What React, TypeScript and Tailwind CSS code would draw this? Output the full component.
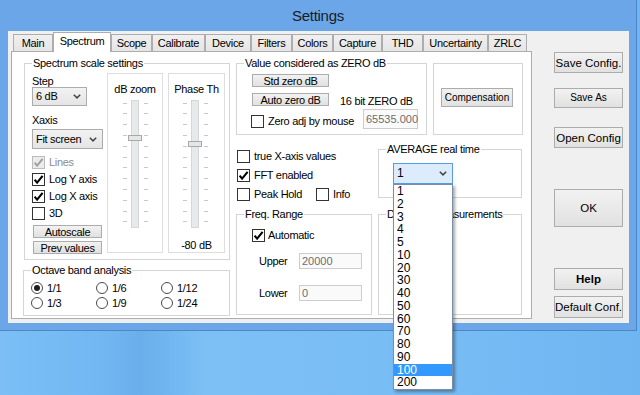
import React from 'react';

const tabs = [
  { label: 'Main', w: 'w-[40px]' },
  { label: 'Spectrum', w: 'w-[58px]', active: true },
  { label: 'Scope', w: 'w-[41px]' },
  { label: 'Calibrate', w: 'w-[53px]' },
  { label: 'Device', w: 'w-[46px]' },
  { label: 'Filters', w: 'w-[41px]' },
  { label: 'Colors', w: 'w-[41px]' },
  { label: 'Capture', w: 'w-[49px]' },
  { label: 'THD', w: 'w-[41px]' },
  { label: 'Uncertainty', w: 'w-[65px]' },
  { label: 'ZRLC', w: 'w-[39px]' },
];

const averages = ['1', '2', '3', '4', '5', '10', '20', '30', '40', '50', '60', '70', '80', '90', '100', '200'];

function Check({ checked, disabled }: { checked?: boolean; disabled?: boolean }) {
  return (
    <span
      className={`w-[13px] h-[13px] shrink-0 border flex items-center justify-center ${
        disabled ? 'border-[#bcbcbc] bg-[#ececec]' : 'border-[#333333] bg-white'
      }`}
    >
      {checked && (
        <svg width="11" height="11" viewBox="0 0 11 11">
          <path d="M1.6 5.6 L4.1 8.6 L9.6 1.8" fill="none" stroke={disabled ? '#a3a3a3' : '#000'} strokeWidth="2.1" />
        </svg>
      )}
    </span>
  );
}

function CheckRow({ label, checked, disabled }: { label: string; checked?: boolean; disabled?: boolean }) {
  return (
    <div className="flex items-start">
      <Check checked={checked} disabled={disabled} />
      <span className={`ml-[4px] leading-[12px] ${disabled ? 'text-[#8d8d8d]' : ''}`}>{label}</span>
    </div>
  );
}

function Radio({ label, checked }: { label: string; checked?: boolean }) {
  return (
    <div className="flex items-center h-[15px]">
      <span className="w-[12px] h-[12px] rounded-full border border-[#4a4a4a] bg-white flex items-center justify-center">
        {checked && <span className="w-[6px] h-[6px] rounded-full bg-[#1e1e1e]" />}
      </span>
      <span className="ml-[4px] leading-[12px]">{label}</span>
    </div>
  );
}

function Btn({ className = '', children }: { className?: string; children: React.ReactNode }) {
  return (
    <button
      type="button"
      className={`border border-[#acacac] bg-linear-to-b from-[#f2f2f2] to-[#e1e1e1] flex items-center justify-center overflow-hidden leading-[12px] whitespace-nowrap ${className}`}
    >
      {children}
    </button>
  );
}

function Group({ title, className = '', children }: { title?: string; className?: string; children?: React.ReactNode }) {
  return (
    <fieldset className={`border border-[#d5d5d5] min-w-0 shrink-0 ${className}`}>
      {title && <legend className="ml-[7px] px-[1px] leading-[13px] whitespace-nowrap">{title}</legend>}
      {children}
    </fieldset>
  );
}

function Combo({ value, focused, className = '' }: { value: string; focused?: boolean; className?: string }) {
  return (
    <div
      className={`border flex items-center justify-between pl-[3px] pr-[5px] ${
        focused ? 'border-[#569de5] bg-[#dcecfc] text-[12px]' : 'border-[#acacac] bg-linear-to-b from-[#f2f2f2] to-[#e5e5e5]'
      } ${className}`}
    >
      <span className="leading-[13px]">{value}</span>
      <svg width="8" height="5" viewBox="0 0 8 5">
        <path d="M0.8 0.8 L4 3.9 L7.2 0.8" fill="none" stroke="#444" strokeWidth="1.5" />
      </svg>
    </div>
  );
}

function TextBox({ value, className = '' }: { value: string; className?: string }) {
  return (
    <div className={`border border-[#cccccc] bg-[#fafafa] text-[#6d6d6d] flex items-center pl-[2px] tracking-normal ${className}`}>
      {value}
    </div>
  );
}

function Slider({ width, trackX, thumbY, ticksL, ticksR }: { width: number; trackX: number; thumbY: number; ticksL: number; ticksR: number }) {
  const ticks = Array.from({ length: 12 }, (_, i) => 2.5 + i * 10.8);
  return (
    <svg width={width} height="128" viewBox={`0 0 ${width} 128`} className="mt-[4px]">
      <rect x={trackX + 0.5} y="0.5" width="7" height="127" fill="#e7eaea" stroke="#d6d6d6" />
      {ticks.map((y) => (
        <g key={y}>
          <line x1={ticksL} x2={ticksL + 4} y1={Math.round(y) + 0.5} y2={Math.round(y) + 0.5} stroke="#c8c8c8" />
          <line x1={ticksR} x2={ticksR + 4} y1={Math.round(y) + 0.5} y2={Math.round(y) + 0.5} stroke="#c8c8c8" />
        </g>
      ))}
      <rect x={trackX - 2.5} y={thumbY + 0.5} width="13" height="5" fill="#e6e6e6" stroke="#a8a8a8" />
    </svg>
  );
}

export default function App() {
  return (
    <div className="w-[640px] h-[395px] overflow-hidden bg-[linear-gradient(90deg,#7bbff6_0%,#72b7f2_16%,#6aaeeb_22%,#7cc0f6_32%,#77bcf4_70%,#6fb5f1_100%)] font-['Liberation_Sans',Arial,sans-serif] text-[11px] tracking-[-0.3px] text-black">
      <div className="w-[637px] h-[331px] bg-[#6aa6e8] border-r border-b border-[#4f86c6] flex flex-col">
        <div className="h-[31px] flex items-center justify-center text-[15px] text-[#1c1c1c] leading-[31px]">Settings</div>

        <div className="flex-1 ml-[8px] mr-[7px] mb-[7px] bg-[#f0f0f0] flex">
          {/* tab control */}
          <div className="ml-[3px] mt-[1px] flex flex-col">
            <div className="flex items-end pl-[2px]">
              {tabs.map((t) =>
                t.active ? (
                  <div
                    key={t.label}
                    className={`${t.w} h-[20px] -mb-px relative z-10 bg-white border border-b-0 border-[#adadad] flex justify-center pt-[2px] leading-[13px]`}
                  >
                    {t.label}
                  </div>
                ) : (
                  <div
                    key={t.label}
                    className={`${t.w} h-[17px] bg-linear-to-b from-[#f0f0f0] to-[#e5e5e5] border border-b-0 border-[#adadad] flex justify-center pt-[2px] leading-[13px]`}
                  >
                    {t.label}
                  </div>
                )
              )}
            </div>

            <div className="w-[521px] h-[268px] bg-white border border-[#adadad] flex pl-[11px]">
              {/* column A */}
              <div className="w-[207px] flex flex-col">
                <Group title="Spectrum scale settings" className="ml-[1px] w-[206px] h-[203px] mt-[5px]">
                  <div className="flex pl-[7px]">
                    <div className="w-[71px] flex flex-col items-start">
                      <div className="mt-[5px] leading-[12px]">Step</div>
                      <Combo value="6 dB" className="w-[55px] h-[19px]" />
                      <div className="mt-[8px] leading-[12px]">Xaxis</div>
                      <Combo value="Fit screen" className="mt-[3px] w-[71px] h-[20px]" />
                      <div className="mt-[7px] flex flex-col">
                        <div className="h-[17px]"><CheckRow label="Lines" checked disabled /></div>
                        <div className="h-[17px]"><CheckRow label="Log Y axis" checked /></div>
                        <div className="h-[17px]"><CheckRow label="Log X axis" checked /></div>
                        <div className="h-[17px]"><CheckRow label="3D" /></div>
                      </div>
                      <Btn className="mt-[1px] ml-[1px] w-[69px] h-[13px]">Autoscale</Btn>
                      <Btn className="mt-[3px] ml-[1px] w-[69px] h-[13px]">Prev values</Btn>
                    </div>

                    <div className="ml-[4px] mt-[3px] w-[56px] h-[180px] border border-[#dedede] flex flex-col items-center">
                      <div className="mt-[9px] leading-[13px]">dB zoom</div>
                      <Slider width={54} trackX={23} thumbY={35} ticksL={15} ticksR={36} />
                    </div>

                    <div className="ml-[5px] mt-[3px] w-[57px] h-[180px] border border-[#dedede] flex flex-col items-center">
                      <div className="mt-[9px] leading-[13px]">Phase Th</div>
                      <Slider width={55} trackX={22} thumbY={41} ticksL={14} ticksR={35} />
                      <div className="mt-[11px] leading-[12px]">-80 dB</div>
                    </div>
                  </div>
                </Group>

                <Group title="Octave band analysis" className="w-[207px] h-[52px] mt-[4px]">
                  <div className="grid grid-cols-[65px_65px_65px] pl-[7px] mt-[3px]">
                    <Radio label="1/1" checked />
                    <Radio label="1/6" />
                    <Radio label="1/12" />
                    <Radio label="1/3" />
                    <Radio label="1/9" />
                    <Radio label="1/24" />
                  </div>
                </Group>
              </div>

              {/* column B */}
              <div className="ml-[6px] w-[286px] flex flex-col">
                <div className="flex items-start">
                  <Group title="Value considered as ZERO dB" className="w-[191px] h-[78px] mt-[5px]">
                    <div className="pl-[15px] pr-[8px] flex flex-col">
                      <Btn className="mt-[4px] w-[77px] h-[13px]">Std zero dB</Btn>
                      <div className="flex items-start mt-[6px]">
                        <Btn className="w-[77px] h-[13px]">Auto zero dB</Btn>
                        <span className="ml-[11px] mt-[2px] leading-[13px]">16 bit ZERO dB</span>
                      </div>
                      <div className="flex items-end mt-[1px] h-[20px]">
                        <span className="-ml-[1px] mb-[1px]"><Check /></span>
                        <span className="ml-[4px] mb-[1px] leading-[13px]">Zero adj by mouse</span>
                        <TextBox value="65535.000" className="ml-auto w-[55px] h-[20px]" />
                      </div>
                    </div>
                  </Group>
                  <div className="ml-[6px] mt-[11px] w-[90px] h-[72px] border border-[#d5d5d5] shrink-0">
                    <Btn className="mt-[24px] ml-[7px] w-[72px] h-[19px] text-[10px] tracking-normal">Compensation</Btn>
                  </div>
                </div>

                <div className="flex">
                  <div className="w-[136px] flex flex-col">
                    <div className="mt-[15px] ml-[1px] flex flex-col">
                      <div className="h-[19px]"><CheckRow label="true X-axis values" /></div>
                      <div className="h-[19px]"><CheckRow label="FFT enabled" checked /></div>
                      <div className="h-[19px] flex items-start">
                        <div className="w-[79px]"><CheckRow label="Peak Hold" /></div>
                        <CheckRow label="Info" />
                      </div>
                    </div>
                    <Group title="Freq. Range" className="mt-[1px] w-[136px] h-[107px]">
                      <div className="flex flex-col">
                        <div className="mt-[8px] ml-[15px] flex items-start">
                          <Check checked />
                          <span className="ml-[3px] leading-[12px]">Automatic</span>
                        </div>
                        <div className="mt-[11px] h-[16px] flex items-center">
                          <span className="w-[62px] pl-[22px] leading-[13px]">Upper</span>
                          <TextBox value="20000" className="w-[63px] h-[16px]" />
                        </div>
                        <div className="mt-[16px] h-[16px] flex items-center">
                          <span className="w-[62px] pl-[22px] leading-[13px]">Lower</span>
                          <TextBox value="0" className="w-[63px] h-[16px]" />
                        </div>
                      </div>
                    </Group>
                  </div>

                  <div className="ml-[6px] w-[144px] flex flex-col">
                    <Group title="AVERAGE real time" className="mt-[8px] w-[144px] h-[55px]">
                      <div className="relative ml-[14px] mt-[7px] w-[60px] h-[21px]">
                        <Combo value="1" focused className="w-[60px] h-[21px]" />
                        <div className="absolute left-0 top-full z-20 w-[60px] border border-[#7a8ea8] bg-white shadow-[2px_2px_3px_rgba(0,0,0,0.35)] text-[12px] tracking-normal">
                          {averages.map((v) => (
                            <div
                              key={v}
                              className={`h-[12.75px] leading-[12.75px] pl-[3px] ${v === '100' ? 'bg-[#3399ff] text-white' : ''}`}
                            >
                              {v}
                            </div>
                          ))}
                        </div>
                      </div>
                    </Group>
                    <Group title="Distortion measurements" className="mt-[10px] w-[144px] h-[107px]" />
                  </div>
                </div>
              </div>
            </div>
          </div>

          {/* right buttons */}
          <div className="ml-[22px] pt-[21px] w-[69px] flex flex-col text-[11.5px] tracking-normal">
            <Btn className="w-[69px] h-[21px]">Save Config.</Btn>
            <Btn className="mt-[15px] w-[69px] h-[20px] text-[10px]">Save As</Btn>
            <Btn className="mt-[19px] w-[69px] h-[21px]">Open Config</Btn>
            <Btn className="mt-[41px] w-[69px] h-[38px]">OK</Btn>
            <Btn className="mt-[41px] w-[69px] h-[22px] font-bold">Help</Btn>
            <Btn className="mt-[6px] w-[69px] h-[22px]">Default Conf.</Btn>
          </div>
        </div>
      </div>
    </div>
  );
}
